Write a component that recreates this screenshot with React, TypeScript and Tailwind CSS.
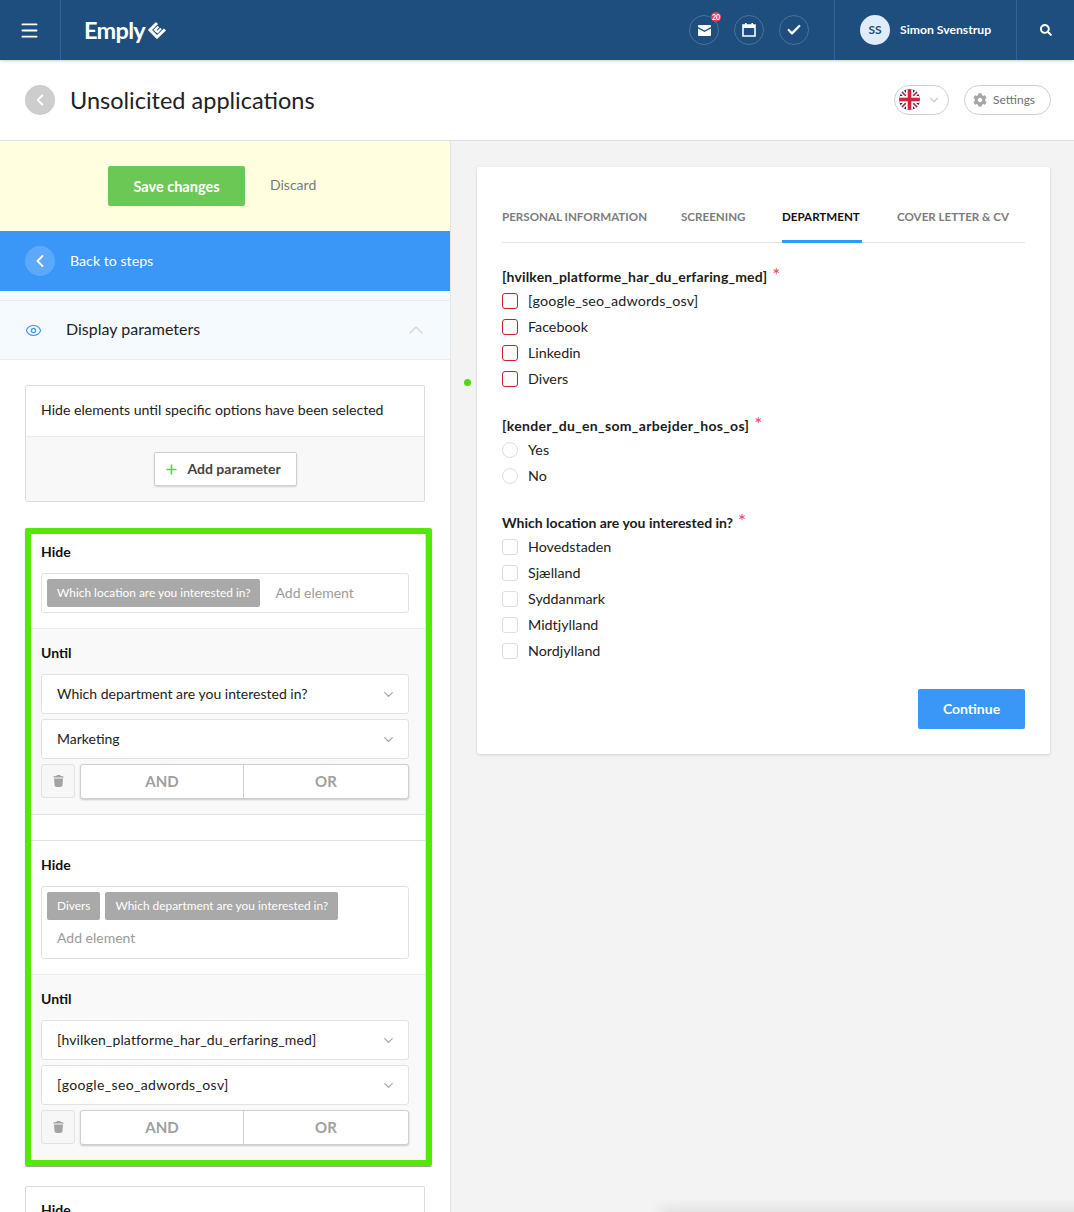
import React from "react";
import { Check, ChevronDown, ChevronLeft, ChevronUp, Eye, Menu, Plus } from "lucide-react";
import { FaCog, FaSearch } from "react-icons/fa";

const font = { fontFamily: '"Lato", "Liberation Sans", sans-serif' };

function LogoMark() {
  return (
    <svg width="20" height="18" viewBox="0 0 20 18" fill="none" stroke="#fff" strokeWidth="3" strokeLinecap="butt">
      <path d="M10 2 L3 9 L10 16 L18 8.5" />
      <path d="M11.5 5.5 L8 9 L10.5 11 L14 7.5" strokeWidth="2.2" />
    </svg>
  );
}

function MailIcon() {
  return (
    <svg width="13" height="11" viewBox="0 0 13 11">
      <path d="M1 0 H12 A1 1 0 0 1 13 1 V2 L6.5 5.5 L0 2 V1 A1 1 0 0 1 1 0 Z" fill="#fff" />
      <path d="M0 3.4 L6.5 6.9 L13 3.4 V10 A1 1 0 0 1 12 11 H1 A1 1 0 0 1 0 10 Z" fill="#fff" />
    </svg>
  );
}

function CalendarIcon() {
  return (
    <svg width="14" height="14" viewBox="0 0 14 14" fill="none">
      <path d="M1 2 H13 V13 H1 Z" stroke="#fff" strokeWidth="1.6" />
      <rect x="1" y="2" width="12" height="3" fill="#fff" />
      <rect x="3" y="0" width="1.6" height="3" fill="#fff" />
      <rect x="9.4" y="0" width="1.6" height="3" fill="#fff" />
    </svg>
  );
}

function TrashIcon() {
  return (
    <svg width="11" height="12" viewBox="0 0 11 12" fill="#a3a3a3">
      <path d="M1 3.4 H10 L9.4 10.5 C9.2 11.6 7.5 12 5.5 12 C3.5 12 1.8 11.6 1.6 10.5 Z" />
      <path d="M0 2.5 C0.2 1.2 2 0.8 3.6 0.7 L4 0 H7 L7.4 0.7 C9 0.8 10.8 1.2 11 2.5 Z" />
    </svg>
  );
}

function Flag() {
  return (
    <svg width="21" height="21" viewBox="0 0 21 21">
      <defs>
        <clipPath id="flagc">
          <circle cx="10.5" cy="10.5" r="10.5" />
        </clipPath>
      </defs>
      <g clipPath="url(#flagc)">
        <rect width="21" height="21" fill="#1f2f7a" />
        <path d="M0 0 L21 21 M21 0 L0 21" stroke="#fff" strokeWidth="4.5" />
        <path d="M0 0 L21 21 M21 0 L0 21" stroke="#d2233c" strokeWidth="1.6" />
        <rect x="7" width="7" height="21" fill="#fff" />
        <rect y="7" width="21" height="7" fill="#fff" />
        <rect x="8.7" width="3.6" height="21" fill="#d2233c" />
        <rect y="8.7" width="21" height="3.6" fill="#d2233c" />
      </g>
    </svg>
  );
}

function HeaderCircle({ children }: { children: React.ReactNode }) {
  return (
    <div className="relative flex h-[30px] w-[30px] items-center justify-center rounded-full border border-[#4c7299]">
      {children}
    </div>
  );
}

function Chip({ children }: { children: React.ReactNode }) {
  return (
    <span className="flex h-[28px] items-center rounded-[2px] bg-[#a9a9a9] px-[10px] text-[11.9px] text-white">
      {children}
    </span>
  );
}

function SelectBox({ children, textClass }: { children: React.ReactNode; textClass?: string }) {
  return (
    <div className="flex h-[40px] items-center justify-between rounded-[3px] border border-[#e2e2e2] bg-white pl-[15px] pr-[12px] text-[14px] text-[#222]">
      <span className={`relative top-[-1px] ${textClass ?? ""}`}>{children}</span>
      <ChevronDown size={15} strokeWidth={2.2} color="#a8a8a8" />
    </div>
  );
}

function LogicRow() {
  return (
    <div className="flex gap-[5px]">
      <div className="flex h-[34px] w-[34px] items-center justify-center rounded-[3px] border border-[#e2e2e2] bg-[#f7f7f7]">
        <TrashIcon />
      </div>
      <div className="flex h-[35px] flex-1 rounded-[3px] border border-[#cfcfcf] bg-white text-[15px] font-bold text-[#a0a0a0] shadow-[0_1px_2px_rgba(0,0,0,0.2)]">
        <div className="flex w-[163px] items-center justify-center border-r border-[#cfcfcf]">AND</div>
        <div className="flex flex-1 items-center justify-center">OR</div>
      </div>
    </div>
  );
}

function Rule({
  first,
  field,
  select1,
  select2,
  class1,
  class2,
  bottomBorder,
}: {
  first?: boolean;
  field: React.ReactNode;
  select1: string;
  select2: string;
  class1?: string;
  class2?: string;
  bottomBorder?: boolean;
}) {
  return (
    <div className={first ? "border-r border-[#e2e2e2]" : "border-r border-t border-[#e2e2e2]"}>
      <div className={`border-b border-[#ececec] bg-white pb-[15px] pl-[10px] pr-[16px] ${first ? "pt-[8px]" : "pt-[14px]"}`}>
        <div className="mb-[11px] h-[20px] text-[14px] font-bold leading-[20px] text-[#111]">Hide</div>
        {field}
      </div>
      <div className={`bg-[#f9f9f9] pb-[15px] pl-[10px] pr-[16px] pt-[14px] ${bottomBorder ? "border-b border-[#e2e2e2]" : ""}`}>
        <div className="mb-[11px] h-[20px] text-[14px] font-bold leading-[20px] text-[#111]">Until</div>
        <div className="flex flex-col gap-[5px]">
          <SelectBox textClass={class1}>{select1}</SelectBox>
          <SelectBox textClass={class2}>{select2}</SelectBox>
          <LogicRow />
        </div>
      </div>
    </div>
  );
}

function GroupLabel({ children, textClass }: { children: React.ReactNode; textClass?: string }) {
  return (
    <div className="flex h-[20px] text-[14px] font-bold leading-[20px] text-[#1c1c1c]">
      <span className={textClass ?? ""}>{children}</span>
      <span className="relative top-[-2px] ml-[5px] text-[19px] font-normal leading-[20px] text-[#f2434f]">*</span>
    </div>
  );
}

function Option({ label, kind, textClass }: { label: string; kind: "error" | "radio" | "box"; textClass?: string }) {
  const box =
    kind === "error"
      ? "rounded-[3px] border border-[#c9202e] bg-[#fdfbfb]"
      : kind === "radio"
        ? "rounded-full border border-[#dedede] bg-white"
        : "rounded-[3px] border border-[#dedede] bg-white";
  return (
    <div className="flex h-[26px] items-center gap-[10px] text-[14.3px] text-[#222]">
      <span className={`h-[16px] w-[16px] ${box}`} />
      <span className={textClass ?? ""}>{label}</span>
    </div>
  );
}

export default function App() {
  return (
    <div style={font} className="relative h-[1212px] w-[1074px] overflow-hidden bg-white">
      <header className="relative z-10 flex h-[60px] items-stretch bg-[#1d4e7d] text-white shadow-[0_1px_3px_rgba(0,0,0,0.2)]">
        <div className="flex w-[61px] items-center justify-center border-r border-[#38638e] pr-[1px]">
          <Menu size={21} strokeWidth={2.2} color="#fff" />
        </div>
        <div className="flex items-center gap-[2px] pl-[23px]">
          <span className="relative top-[1px] text-[23.5px] font-bold leading-none tracking-[-0.7px]">Emply</span>
          <LogoMark />
        </div>
        <div className="ml-auto flex w-[145px] items-center gap-[15px]">
          <HeaderCircle>
            <MailIcon />
            <span className="absolute right-[-3px] top-[-4px] flex h-[10px] w-[10px] items-center justify-center rounded-full bg-[#e8434d] text-[7px] font-bold leading-none text-white">
              20
            </span>
          </HeaderCircle>
          <HeaderCircle>
            <CalendarIcon />
          </HeaderCircle>
          <HeaderCircle>
            <Check size={16} strokeWidth={3.4} color="#fff" />
          </HeaderCircle>
        </div>
        <div className="flex w-[182px] items-center border-l border-[#38638e] pl-[25px]">
          <div className="flex h-[30px] w-[30px] items-center justify-center rounded-full bg-[#deecfc] text-[12px] font-bold text-[#1d4e7d]">
            SS
          </div>
          <span className="ml-[10px] text-[12.2px] font-bold">Simon Svenstrup</span>
        </div>
        <div className="flex w-[58px] items-center justify-center border-l border-[#38638e]">
          <FaSearch size={12} color="#fff" />
        </div>
      </header>

      <div className="flex h-[81px] items-center border-b border-[#dedede] pb-[1px] pl-[25px] pr-[23px]">
        <div className="flex h-[30px] w-[30px] items-center justify-center rounded-full bg-[#cdcdcd]">
          <ChevronLeft size={18} strokeWidth={2.5} color="#fff" />
        </div>
        <h1 className="relative top-[1px] ml-[15px] text-[23.5px] font-normal leading-none text-[#222]">Unsolicited applications</h1>
        <div className="ml-auto flex h-[30px] w-[55px] items-center rounded-full border border-[#cfcfcf] pl-[4px]">
          <Flag />
          <ChevronDown size={14} strokeWidth={2.5} color="#cfcfcf" className="ml-[7px]" />
        </div>
        <div className="ml-[15px] flex h-[30px] w-[87px] items-center rounded-full border border-[#cfcfcf] pl-[8px] text-[12px] text-[#707070]">
          <FaCog size={14} color="#a5a5a5" />
          <span className="ml-[6px]">Settings</span>
        </div>
      </div>

      <div className="flex h-[1071px]">
        <aside className="w-[451px] shrink-0 border-r border-[#e4e4e4] bg-white">
          <div className="flex h-[90px] items-center bg-[#ffffe0] pl-[108px]">
            <div className="flex h-[40px] w-[137px] items-center justify-center rounded-[2px] bg-[#6bc855] text-[14.5px] font-bold text-white">
              <span className="relative top-[0.5px]">Save changes</span>
            </div>
            <span className="relative top-[-2px] ml-[25px] text-[14px] text-[#7a7a7a]">Discard</span>
          </div>
          <div className="flex h-[60px] items-center bg-[#3a97f8] pl-[25px] text-white">
            <div className="flex h-[30px] w-[30px] items-center justify-center rounded-full bg-[#5da9f9]">
              <ChevronLeft size={20} strokeWidth={2.2} color="#fff" />
            </div>
            <span className="ml-[15px] text-[14.2px]">Back to steps</span>
          </div>
          <div className="h-[9px] bg-[#f5fafe]" />
          <div className="flex h-[60px] items-center border-y border-[#e3eef9] bg-[#f5fafe] pl-[25px] pr-[22px]">
            <Eye size={17} strokeWidth={1.6} color="#3a97f8" />
            <span className="relative top-[-1px] ml-[24px] text-[16px] text-[#222]">Display parameters</span>
            <ChevronUp size={24} strokeWidth={1.6} color="#d8d8d8" className="ml-auto" />
          </div>

          <div className="px-[25px] pt-[25px]">
            <div className="rounded-[2px] border border-[#dcdcdc]">
              <div className="flex h-[51px] items-center border-b border-[#ececec] pl-[15px] text-[14.1px] text-[#222]">
                <span className="relative top-[-1px]">Hide elements until specific options have been selected</span>
              </div>
              <div className="flex h-[64px] items-center justify-center bg-[#f8f8f8]">
                <div className="flex h-[34px] w-[143px] items-center rounded-[2px] border border-[#cfcfcf] bg-white pl-[9px] text-[14px] font-bold text-[#444] shadow-[0_1px_2px_rgba(0,0,0,0.15)]">
                  <Plus size={15} strokeWidth={2.5} color="#6bc855" />
                  <span className="relative top-[-1px] ml-[9px]">Add parameter</span>
                </div>
              </div>
            </div>

            <div className="mt-[26px] w-[407px] rounded-[2px] border-[6px] border-[#54e807] shadow-[0_1px_1px_rgba(0,0,0,0.4)]">
              <Rule
                first
                bottomBorder
                select1="Which department are you interested in?"
                select2="Marketing"
                field={
                  <div className="flex h-[40px] items-center rounded-[3px] border border-[#e2e2e2] bg-white pl-[5px]">
                    <Chip>Which location are you interested in?</Chip>
                    <span className="relative top-[-1px] ml-[15px] text-[14px] text-[#9a9a9a]">Add element</span>
                  </div>
                }
              />
              <div className="h-[25px] border-r border-[#e2e2e2] bg-white" />
              <Rule
                select1="[hvilken_platforme_har_du_erfaring_med]"
                select2="[google_seo_adwords_osv]"
                class1="tracking-[0.14px]"
                class2="tracking-[0.35px]"
                field={
                  <div className="h-[73px] rounded-[3px] border border-[#e2e2e2] bg-white pl-[5px] pt-[5px]">
                    <div className="flex gap-[5px]">
                      <Chip>Divers</Chip>
                      <Chip>Which department are you interested in?</Chip>
                    </div>
                    <div className="ml-[10px] mt-[7px] text-[14px] text-[#9a9a9a]">Add element</div>
                  </div>
                }
              />
            </div>

            <div className="mt-[20px] h-[100px] w-[400px] rounded-[2px] border border-[#dcdcdc] pl-[15px] pt-[13px]">
              <div className="text-[14px] font-bold leading-[20px] text-[#111]">Hide</div>
            </div>
          </div>
        </aside>

        <main className="flex-1 bg-[#f3f3f3] pl-[26px] pr-[24px] pt-[26px]">
          <div className="relative h-[587px] rounded-[2px] bg-white px-[25px] pt-[25px] shadow-[0_1px_3px_rgba(0,0,0,0.15)]">
            <span className="absolute left-[-13px] top-[212px] h-[7px] w-[7px] rounded-full bg-[#54d80f]" />
            <div className="flex h-[51px] gap-[35px] border-b border-[#e5e5e5] text-[11.6px] font-bold uppercase leading-[50px] text-[#7c7c7c]">
              <div className="h-[51px] w-[144px] whitespace-nowrap">Personal information</div>
              <div className="h-[51px] w-[66px] whitespace-nowrap">Screening</div>
              <div className="h-[51px] w-[80px] whitespace-nowrap border-b-[3px] border-[#2e9bf8] text-[#111]">Department</div>
              <div className="h-[51px] w-[114px] whitespace-nowrap">Cover letter &amp; CV</div>
            </div>
            <div className="mt-[24px]">
              <GroupLabel textClass="tracking-[0.16px]">[hvilken_platforme_har_du_erfaring_med]</GroupLabel>
              <div className="mt-[1px]">
                <Option kind="error" label="[google_seo_adwords_osv]" textClass="tracking-[0.15px]" />
                <Option kind="error" label="Facebook" />
                <Option kind="error" label="Linkedin" />
                <Option kind="error" label="Divers" />
              </div>
            </div>
            <div className="mt-[24px]">
              <GroupLabel textClass="tracking-[0.33px]">[kender_du_en_som_arbejder_hos_os]</GroupLabel>
              <div className="mt-[1px]">
                <Option kind="radio" label="Yes" />
                <Option kind="radio" label="No" />
              </div>
            </div>
            <div className="mt-[24px]">
              <GroupLabel>Which location are you interested in?</GroupLabel>
              <div className="mt-[1px]">
                <Option kind="box" label="Hovedstaden" />
                <Option kind="box" label="Sjælland" />
                <Option kind="box" label="Syddanmark" />
                <Option kind="box" label="Midtjylland" />
                <Option kind="box" label="Nordjylland" />
              </div>
            </div>
            <div className="mt-[25px] flex justify-end">
              <div className="flex h-[40px] w-[107px] items-center justify-center rounded-[2px] bg-[#3a97f8] text-[14px] font-bold text-white">
                <span className="relative top-[-1px]">Continue</span>
              </div>
            </div>
          </div>
        </main>
      </div>
      <div className="absolute left-[660px] top-[1212px] h-[10px] w-[500px] shadow-[0_-2px_14px_rgba(0,0,0,0.12)]" />
    </div>
  );
}
